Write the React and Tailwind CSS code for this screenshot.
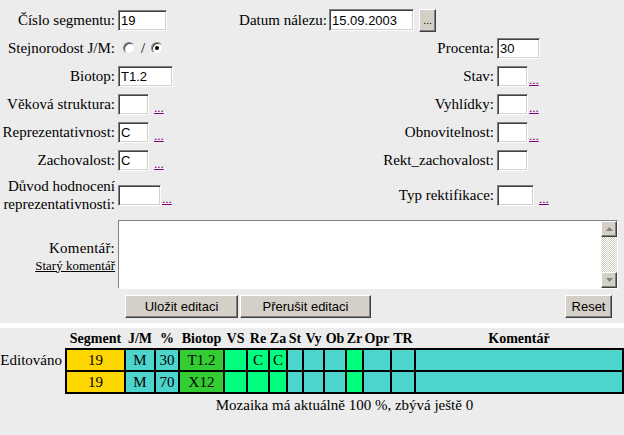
import React from "react";

const serif = "font-[Liberation_Serif,Times_New_Roman,serif]";
const sans = "font-[Liberation_Sans,Arial,sans-serif]";
const inset =
  "border border-t-[#808080] border-l-[#808080] border-b-white border-r-white shadow-[inset_1px_1px_0_#404040,inset_-1px_-1px_0_#d4d0c8] bg-white";
const raised =
  "border border-t-white border-l-white border-b-[#404040] border-r-[#404040] shadow-[inset_-1px_-1px_0_#808080] bg-[#d4d0c8]";

const Field = ({ value = "", className = "" }) => (
  <input
    readOnly
    value={value}
    className={`h-[21px] px-[2px] text-[13px] text-black outline-none ${inset} ${sans} ${className}`}
  />
);

const Dots = ({ className = "" }) => (
  <a href="#" className={`text-[13px] leading-[14px] text-[#800080] underline ${className}`}>
    ...
  </a>
);

const Label = ({ children }) => (
  <span className="flex w-[115px] shrink-0 justify-end whitespace-nowrap">{children}</span>
);

const Radio = ({ checked }) => (
  <span className="flex h-[12px] w-[12px] items-center justify-center rounded-full border border-t-[#808080] border-l-[#808080] border-b-[#e8e8e8] border-r-[#e8e8e8] bg-white shadow-[inset_1px_1px_0_#404040]">
    {checked && <span className="h-[4px] w-[4px] rounded-full bg-black" />}
  </span>
);

const Right = ({ label, children }) => (
  <div className="ml-auto flex items-center">
    <span className="whitespace-nowrap text-right">{label}</span>
    <div className="ml-[3px] flex w-[127px] items-end">{children}</div>
  </div>
);

const Arrow = ({ down }) => (
  <div className={`flex h-[16px] w-[16px] items-center justify-center ${raised}`}>
    <svg width="7" height="4" viewBox="0 0 7 4">
      <polygon points={down ? "0,0 7,0 3.5,4" : "0,4 7,4 3.5,0"} fill="#808080" />
    </svg>
  </div>
);

const cyan = "bg-[#4dd4cd]";
const spring = "bg-[#00ff7f]";
const cols = [
  ["Segment", 59, "bg-[#ffd700]"],
  ["J/M", 30, cyan],
  ["%", 24, cyan],
  ["Biotop", 45, "bg-[#33cc33]"],
  ["VS", 23, spring],
  ["Re", 22, spring],
  ["Za", 18, spring],
  ["St", 16, cyan],
  ["Vy", 21, cyan],
  ["Ob", 22, cyan],
  ["Zr", 17, spring],
  ["Opr", 28, cyan],
  ["TR", 24, cyan],
  ["Komentář", 208, cyan],
];

const rows = [
  ["19", "M", "30", "T1.2", "", "C", "C", "", "", "", "", "", "", ""],
  ["19", "M", "70", "X12", "", "", "", "", "", "", "", "", "", ""],
];

export default function App() {
  return (
    <div className={`min-h-screen bg-[#ececec] text-[15px] text-black ${serif}`}>
      <div className="pt-[6px]">
        {/* row 1 */}
        <div className="flex h-[28px] items-center">
          <Label>Číslo segmentu:</Label>
          <Field value="19" className="ml-[3px] w-[49px]" />
          <span className="w-[160px] whitespace-nowrap text-right">Datum nálezu:</span>
          <Field value="15.09.2003" className="ml-[2px] w-[85px] h-[22px]" />
          <button className={`ml-[5px] h-[23px] w-[17px] text-[11px] leading-none ${raised} ${sans}`}>...</button>
        </div>

        <div className="flex h-[28px] items-center">
          <Label>Stejnorodost J/M:</Label>
          <div className="ml-[8px] flex items-center">
            <Radio />
            <span className="mx-[6px]">/</span>
            <Radio checked />
          </div>
          <Right label="Procenta:">
            <Field value="30" className="w-[43px]" />
          </Right>
        </div>

        <div className="flex h-[28px] items-center">
          <Label>Biotop:</Label>
          <Field value="T1.2" className="ml-[3px] w-[55px]" />
          <Right label="Stav:">
            <Field className="w-[31px]" />
            <Dots className="ml-[1px]" />
          </Right>
        </div>

        <div className="flex h-[28px] items-center">
          <Label>Věková struktura:</Label>
          <div className="ml-[3px] flex items-end">
            <Field className="w-[31px]" />
            <Dots className="ml-[5px]" />
          </div>
          <Right label="Vyhlídky:">
            <Field className="w-[31px]" />
            <Dots className="ml-[1px]" />
          </Right>
        </div>

        <div className="flex h-[28px] items-center">
          <Label>Reprezentativnost:</Label>
          <div className="ml-[3px] flex items-end">
            <Field value="C" className="w-[31px]" />
            <Dots className="ml-[5px]" />
          </div>
          <Right label="Obnovitelnost:">
            <Field className="w-[31px]" />
            <Dots className="ml-[1px]" />
          </Right>
        </div>

        <div className="flex h-[28px] items-center">
          <Label>Zachovalost:</Label>
          <div className="ml-[3px] flex items-end">
            <Field value="C" className="w-[31px]" />
            <Dots className="ml-[5px]" />
          </div>
          <Right label="Rekt_zachovalost:">
            <Field className="w-[31px]" />
          </Right>
        </div>

        <div className="flex h-[42px] items-center">
          <div className="flex w-[115px] shrink-0 flex-col items-end whitespace-nowrap leading-[18px]">
            <span>Důvod hodnocení</span>
            <span>reprezentativnosti:</span>
          </div>
          <div className="ml-[3px] flex items-end">
            <Field className="w-[43px]" />
            <Dots className="ml-[1px]" />
          </div>
          <Right label="Typ rektifikace:">
            <Field className="w-[37px]" />
            <Dots className="ml-[5px]" />
          </Right>
        </div>

        {/* comment */}
        <div className="mt-[4px] flex items-center">
          <div className="flex w-[115px] shrink-0 flex-col items-end pt-[3px] whitespace-nowrap">
            <span className="text-[15px] leading-[18px] tracking-[0.2px]">Komentář:</span>
            <a href="#" className="text-[13px] leading-[17px] text-black underline">
              Starý komentář
            </a>
          </div>
          <div className={`ml-[3px] flex h-[69px] w-[500px] ${inset}`}>
            <textarea readOnly className={`flex-1 resize-none bg-white px-[2px] text-[13px] outline-none ${sans}`} />
            <div className="flex w-[16px] flex-col">
              <Arrow />
              <div className="flex-1 bg-[repeating-conic-gradient(#d4d0c8_0%_25%,#ffffff_0%_50%)] bg-[length:2px_2px]" />
              <Arrow down />
            </div>
          </div>
        </div>

        {/* buttons */}
        <div className={`mt-[6px] flex pl-[125px] text-[13px] ${sans}`}>
          <button className={`h-[23px] w-[113px] ${raised}`}>Uložit editaci</button>
          <button className={`ml-[2px] h-[23px] w-[131px] ${raised}`}>Přerušit editaci</button>
          <button className={`ml-auto mr-[12px] h-[23px] w-[47px] ${raised}`}>Reset</button>
        </div>
      </div>

      <div className="mt-[5px] h-[5px] bg-white" />

      {/* overview table */}
      <table className={`mt-[2px] w-[623px] table-fixed border-collapse text-[15px] ${serif}`}>
        <colgroup>
          <col className="w-[66px]" />
          {cols.map(([name, w]) => (
            <col key={name} style={{ width: w }} />
          ))}
        </colgroup>
        <thead>
          <tr className="h-[19px]">
            <th />
            {cols.map(([name]) => (
              <th key={name} className="whitespace-nowrap p-0 text-center text-[14px] font-bold leading-[18px]">
                {name}
              </th>
            ))}
          </tr>
        </thead>
        <tbody>
          {rows.map((r, i) => (
            <tr key={i} className="h-[22px]">
              <td className="whitespace-nowrap p-0 pr-[3px] text-right leading-none">
                {i === 0 ? "Editováno" : ""}
              </td>
              {r.map((v, j) => (
                <td key={j} className={`border-2 border-black p-0 text-center leading-none ${cols[j][2]}`}>
                  {v}
                </td>
              ))}
            </tr>
          ))}
          <tr>
            <td />
            <td colSpan={14} className="p-0 pt-[2px] text-center leading-[18px]">
              Mozaika má aktuálně 100 %, zbývá ještě 0
            </td>
          </tr>
        </tbody>
      </table>
    </div>
  );
}
